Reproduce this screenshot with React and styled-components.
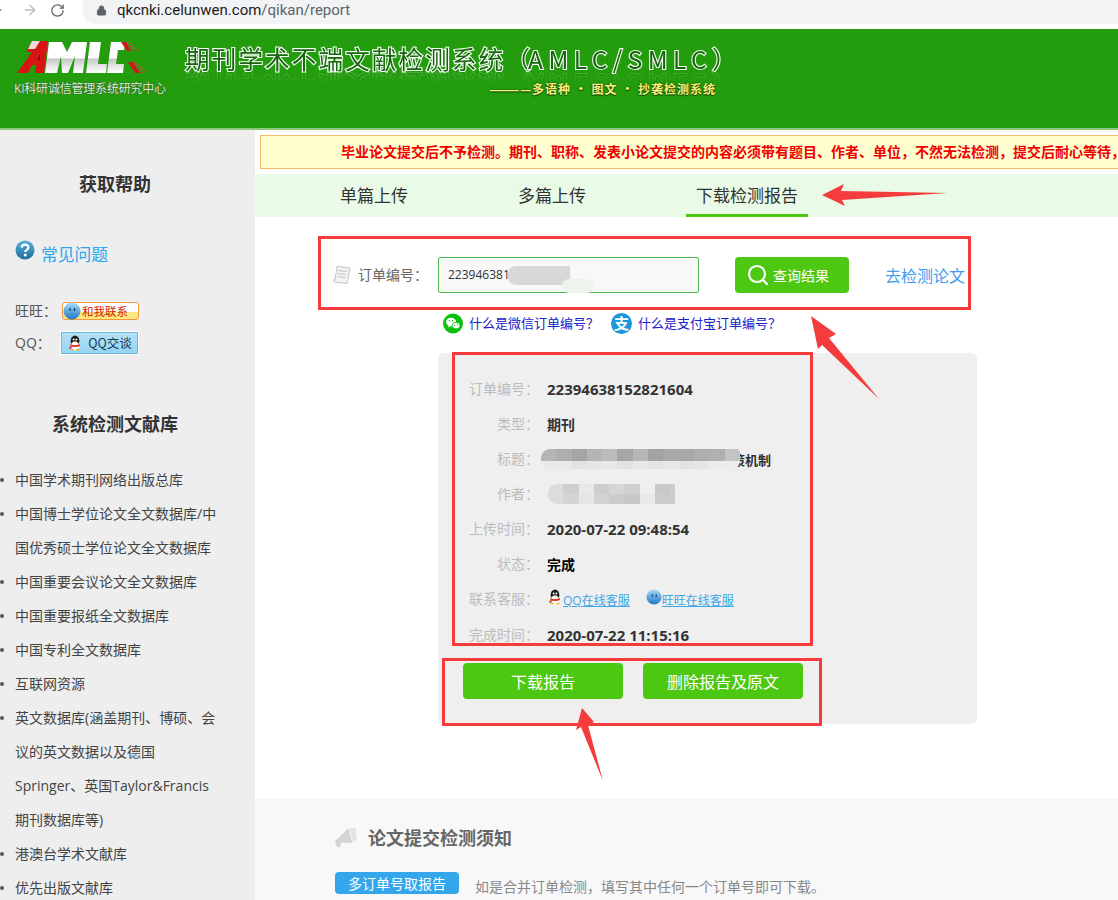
import React from "react";
import styled, { createGlobalStyle } from "styled-components";
import { ArrowLeft, ArrowRight, RotateCw, Lock, Search } from "lucide-react";

const Global = createGlobalStyle`
  html, body { margin: 0; padding: 0; background: #fff; }
  body { font-family: "Open Sans", "Noto Sans CJK SC", sans-serif; }
  * { box-sizing: border-box; }
`;

const Page = styled.div`
  position: relative;
  width: 1118px;
  height: 900px;
  overflow: hidden;
  background: #fff;
`;

/* browser chrome */
const Chrome = styled.div`
  height: 29px;
  display: flex;
  align-items: flex-start;
  background: #fff;
  color: #5f6368;
`;
const NavIcon = styled.span`
  width: ${(p) => p.$w}px;
  height: 20px;
  flex: none;
  display: flex;
  align-items: center;
  justify-content: ${(p) => p.$justify || "center"};
  color: ${(p) => p.$color || "#5f6368"};
  overflow: hidden;
`;
const Omnibox = styled.div`
  flex: 1;
  height: 24px;
  margin-left: 7px;
  padding: 0 0 4px 13px;
  display: flex;
  align-items: center;
  gap: 10px;
  background: #f1f3f4;
  border-radius: 0 0 0 12px;
`;
const Url = styled.span`
  font: 400 15px/20px Roboto, sans-serif;
  color: #202124;
  span { color: #5f6368; }
`;

/* green site banner */
const Banner = styled.header`
  height: 101px;
  background: #239d0e;
  border-bottom: 2px solid #8cc97f;
  display: flex;
`;
const Brand = styled.div`
  width: 185px;
  flex: none;
  padding: 11px 0 0 15px;
  svg { display: block; }
`;
const BrandCaption = styled.div`
  margin: 6px 0 0 -1px;
  width: 170px;
  font-size: 12px;
  line-height: 16px;
  letter-spacing: -0.2px;
  color: #dfe9da;
  white-space: nowrap;
  text-shadow: 0 0 1px #33502c, 0 0 1px #33502c;
`;
const BannerText = styled.div`
  width: 537px;
  padding-top: 14px;
`;
const BannerTitle = styled.div`
  font: 400 24.5px/32px "Noto Sans CJK SC", sans-serif;
  letter-spacing: 2.2px;
  white-space: nowrap;
  color: #17650f;
  -webkit-text-stroke: 2.2px #f6fff4;
  paint-order: stroke fill;
  -webkit-box-reflect: below -7px linear-gradient(transparent 50%, rgba(255, 255, 255, 0.22));
`;
const TitleLatin = styled.span`
  letter-spacing: 5.4px;
  margin-left: -4px;
`;
const BannerSub = styled.div`
  margin-top: 5px;
  text-align: right;
  padding-right: 6px;
  font: 700 12px/18px "Noto Sans CJK SC", sans-serif;
  letter-spacing: 1px;
  color: #f7ee7e;
  text-shadow: 0 0 2px #0c4204, 0 1px 1px #0c4204;
  white-space: nowrap;
`;

/* two columns under the banner */
const Columns = styled.div`
  display: flex;
  height: 770px;
`;
const Sidebar = styled.aside`
  width: 255px;
  flex: none;
  background: #eee;
  color: #444;
  padding-top: 41px;
`;
const SideTitle = styled.h3`
  margin: 0;
  padding-right: 25px;
  text-align: center;
  font: 700 18px/24px "Noto Sans CJK SC", sans-serif;
  color: #333;
`;
const FaqRow = styled.div`
  display: flex;
  align-items: flex-start;
  gap: 6px;
  margin: 45px 0 0 15px;
  height: 30px;
`;
const FaqLink = styled.a`
  font-size: 16.8px;
  line-height: 30px;
  color: #2aa7f0;
`;
const ContactRow = styled.div`
  display: flex;
  align-items: center;
  height: ${(p) => p.$h}px;
  margin: ${(p) => p.$top}px 0 0 15px;
  font: 400 14px/20px "Open Sans", "Noto Sans CJK SC", sans-serif;
  color: #555;
`;
const ContactLabel = styled.span`
  width: ${(p) => p.$w}px;
  flex: none;
`;
const WangBadge = styled.span`
  width: 77px;
  height: 18px;
  display: flex;
  align-items: center;
  gap: 1px;
  border: 1px solid #f59a3c;
  border-radius: 3px;
  background: linear-gradient(#fff 0 55%, #ffe680 55% 100%);
  font: 400 11.5px/16px "Noto Sans CJK SC", sans-serif;
  color: #d01c00;
  white-space: nowrap;
`;
const QQBadge = styled.span`
  width: 79px;
  height: 24px;
  display: flex;
  align-items: center;
  justify-content: center;
  gap: 5px;
  border: 1px solid #fff;
  box-shadow: inset 0 0 0 1px #6fb6d8;
  background: linear-gradient(#b7e2f8, #93d3f3);
  font: 400 12.5px/16px "Noto Sans CJK SC", sans-serif;
  color: #163a52;
`;
const LibraryHead = styled(SideTitle)`
  margin-top: 56px;
`;
const LibraryList = styled.ul`
  list-style: none;
  margin: 28px 0 0;
  padding: 0 35px 0 15px;
`;
const LibraryItem = styled.li`
  position: relative;
  font: 400 14px/34px "Open Sans", "Noto Sans CJK SC", sans-serif;
  color: #444;
  &::before {
    content: "";
    position: absolute;
    left: -15px;
    top: 15px;
    width: 4px;
    height: 4px;
    border-radius: 50%;
    background: #555;
  }
`;

const Main = styled.main`
  flex: 1;
  min-width: 0;
  padding-top: 5px;
  display: flex;
  flex-direction: column;
  > * { flex: none; }
`;
const Notice = styled.div`
  margin-left: 5px;
  height: 34px;
  padding-left: 80px;
  border: 1px solid #f5bd63;
  border-right: 0;
  background: #ffffcf;
  font: 700 14px/30px "Noto Sans CJK SC", sans-serif;
  color: #f00000;
  white-space: nowrap;
  overflow: hidden;
`;
const Tabs = styled.nav`
  margin-top: 5px;
  height: 43px;
  background: #e9fbe6;
  display: flex;
  padding-left: 85px;
`;
const Tab = styled.a`
  display: block;
  width: ${(p) => p.$w}px;
  text-align: ${(p) => (p.$active ? "center" : "left")};
  font: 400 17px/41px "Noto Sans CJK SC", sans-serif;
  color: #333;
  border-bottom: 3px solid ${(p) => (p.$active ? "#4dc812" : "transparent")};
`;
const SearchRow = styled.div`
  margin: 40px 0 0 77px;
  display: flex;
  align-items: center;
  height: 36px;
`;
const SearchLabel = styled.span`
  width: 80px;
  margin: -3px 0 0 6px;
  flex: none;
  font-size: 14px;
  color: #666;
`;
const OrderInput = styled.div`
  width: 261px;
  height: 36px;
  flex: none;
  padding-left: 9px;
  border: 1px solid #4db84d;
  border-radius: 2px;
  background: #f8f8f8;
  font: 400 12px/34px "Open Sans", sans-serif;
  color: #333;
`;
const QueryButton = styled.button`
  width: 114px;
  height: 36px;
  margin-left: 36px;
  flex: none;
  padding: 0 0 0 11px;
  border: 0;
  border-radius: 4px;
  background: #4dc812;
  color: #fff;
  display: flex;
  align-items: center;
  gap: 3px;
  font: 400 14px/20px "Noto Sans CJK SC", sans-serif;
`;
const CheckLink = styled.a`
  margin-left: 36px;
  font-size: 16px;
  color: #3a9bf0;
  white-space: nowrap;
`;
const HelpRow = styled.div`
  margin: 19px 0 0 188px;
  height: 22px;
  display: flex;
  align-items: center;
`;
const HelpLink = styled.a`
  margin: 0 12px 0 6px;
  font: 400 13px/20px "Open Sans", "Noto Sans CJK SC", sans-serif;
  color: #2020c8;
`;
const AlipayDot = styled.span`
  width: 21px;
  height: 21px;
  border-radius: 50%;
  background: #1b96dc;
  color: #fff;
  font: 700 15px/20px "Noto Sans CJK SC", sans-serif;
  text-align: center;
`;
const Panel = styled.section`
  margin: 19px 0 0 183px;
  width: 539px;
  height: 371px;
  padding-top: 19px;
  border-radius: 6px;
  background: #efefef;
`;
const InfoRow = styled.div`
  position: relative;
  display: flex;
  align-items: center;
  height: 35px;
  font: 700 14px/20px "Open Sans", "Noto Sans CJK SC", sans-serif;
  color: #333;
`;
const ClosingRow = styled(InfoRow)`
  padding-top: 2px;
`;
const InfoLabel = styled.span`
  width: 101px;
  margin: -1px 8px 0 0;
  flex: none;
  text-align: right;
  font-weight: 400;
  font-size: 14px;
  color: #bcbcbc;
`;
const InfoValue = styled.span`
  font-size: ${(p) => (p.$num ? 15 : p.$small ? 13 : 14)}px;
  color: ${(p) => p.$color || "#333"};
  margin-left: ${(p) => p.$offset || 0}px;
  margin-top: ${(p) => (p.$num ? -2 : 1)}px;
`;
const ServiceLink = styled.a`
  display: inline-flex;
  align-items: center;
  padding-top: 3px;
  font: 400 12px/16px "Open Sans", "Noto Sans CJK SC", sans-serif;
  color: #3aa7e8;
  text-decoration: underline;
  margin-right: 16px;
  svg { margin-top: -8px; }
`;
const Mosaic = styled.div`
  position: absolute;
  left: ${(p) => p.$left}px;
  top: ${(p) => p.$top}px;
  width: ${(p) => p.$width}px;
  display: grid;
  grid-template-columns: repeat(${(p) => p.$cols}, 15.3px);
  grid-template-rows: ${(p) => p.$rows};
  overflow: hidden;
  border-radius: ${(p) => p.$radius};
`;
const Cell = styled.i`
  display: block;
  background: ${(p) => p.$c};
`;
const ActionRow = styled.div`
  margin: 11px 0 0 25px;
  display: flex;
  gap: 20px;
`;
const ActionButton = styled.button`
  width: 160px;
  height: 36px;
  border: 0;
  border-radius: 4px;
  background: #4dc812;
  color: #fff;
  font: 400 16px/20px "Noto Sans CJK SC", sans-serif;
`;
const Instructions = styled.section`
  margin-top: 75px;
  height: 101px;
  overflow: hidden;
  background: #f8f8f8;
  padding: 26px 0 0 80px;
`;
const InstructionHead = styled.h3`
  margin: 0 0 23px -1px;
  display: flex;
  align-items: center;
  gap: 10px;
  font: 700 18px/24px "Noto Sans CJK SC", sans-serif;
  color: #666;
`;
const InstructionRow = styled.div`
  display: flex;
  align-items: flex-start;
  gap: 16px;
`;
const InstructionTag = styled.span`
  width: 124px;
  height: 22px;
  border-radius: 4px;
  background: #33a6ec;
  color: #fff;
  text-align: center;
  font: 400 14px/22px "Noto Sans CJK SC", sans-serif;
`;
const InstructionText = styled.span`
  font: 400 14px/28px "Noto Sans CJK SC", sans-serif;
  color: #888;
`;

/* hand-drawn review marks that sit on top of the page */
const Outline = styled.div`
  position: absolute;
  left: ${(p) => p.$x}px;
  top: ${(p) => p.$y}px;
  width: ${(p) => p.$w}px;
  height: ${(p) => p.$h}px;
  border: 3px solid #f53c3c;
  pointer-events: none;
`;
const MarkLayer = styled.svg`
  position: absolute;
  inset: 0;
  pointer-events: none;
`;
const Smudge = styled.div`
  position: absolute;
  left: 508px;
  top: 266px;
  width: 62px;
  height: 19px;
  background: #d8d8d8;
  border-radius: 8px 0 0 8px;
  &::after {
    content: "";
    position: absolute;
    left: 54px;
    top: 13px;
    width: 32px;
    height: 14px;
    border-radius: 8px;
    background: #edf4ec;
  }
`;

const LogoMark = () => (
  <svg width="132" height="35" viewBox="0 0 132 35">
    <defs>
      <linearGradient id="logoSteel" x1="0" y1="0" x2="0" y2="1">
        <stop offset="0" stopColor="#fff" />
        <stop offset=".5" stopColor="#fff" />
        <stop offset=".56" stopColor="#c8c8c8" />
        <stop offset=".85" stopColor="#eee" />
        <stop offset="1" stopColor="#fff" />
      </linearGradient>
    </defs>
    <path d="M2 33 L17 12 L11 12 L17 1 L33 1 L29 33 L20 33 L21 25 L17 25 L13 33 Z" fill="#d91414" />
    <path d="M17 1 H25 L20 9 H13 Z" fill="#f6d9d9" />
    <path d="M25 14 L22 20 H25 Z" fill="#7d0d0d" />
    <path d="M34 2 H47 L52 12 L57 2 H72 L68 33 H58 L60 16 L53 33 H47 L46 16 L42 33 H30 Z" fill="url(#logoSteel)" />
    <path d="M75 2 H86 L83 24 H92 L91 33 H71 Z" fill="url(#logoSteel)" />
    <path d="M96 2 H110 L109 10 H103 L101 24 H109 L108 33 H92 Z" fill="url(#logoSteel)" />
    <path d="M106 2 H111 L116 11 H112 Z" fill="#d01616" />
    <path d="M111 2 L120 11 M114 2 L123 11" stroke="#d04a3a" strokeWidth="1" />
    <path d="M113 22 H118 L125 33 H120 Z" fill="#d01616" />
    <path d="M118 22 L128 33 M121 22 L131 33" stroke="#d04a3a" strokeWidth="1" />
  </svg>
);
const HelpCircle = () => (
  <svg width="20" height="20" viewBox="0 0 20 20">
    <defs>
      <linearGradient id="faqBall" x1="0" y1="0" x2="0" y2="1">
        <stop offset="0" stopColor="#57b1d9" />
        <stop offset="1" stopColor="#1c6ea0" />
      </linearGradient>
    </defs>
    <circle cx="10" cy="10" r="9.5" fill="url(#faqBall)" />
    <path d="M6.7 7.6 C6.8 3.6 13.4 3.6 13.4 7.5 C13.4 10 10.2 9.8 10.2 12" fill="none" stroke="#fff" strokeWidth="2.2" />
    <circle cx="10.2" cy="15" r="1.5" fill="#fff" />
  </svg>
);
const WangFace = ({ size = 18 }) => (
  <svg width={size} height={size} viewBox="0 0 18 18">
    <defs>
      <linearGradient id={`wang${size}`} x1="0" y1="0" x2="0" y2="1">
        <stop offset="0" stopColor="#a8dcf7" />
        <stop offset="1" stopColor="#1f77c8" />
      </linearGradient>
    </defs>
    <circle cx="9" cy="9" r="8.5" fill={`url(#wang${size})`} />
    <path d="M7 6 V9 M11.5 6 V9" stroke="#12365c" strokeWidth="1.2" />
  </svg>
);
const Penguin = ({ size = 16 }) => (
  <svg width={size} height={size} viewBox="0 0 16 16">
    <ellipse cx="8" cy="6" rx="4.4" ry="5.4" fill="#1b1b1b" />
    <ellipse cx="8" cy="11" rx="4.4" ry="4.4" fill="#fff" />
    <path d="M3.4 9 Q8 11.4 12.6 9 L13 11 Q8 13 3 11 Z M3.4 10 L2 14 L5 13 Z" fill="#e0271b" />
    <circle cx="6.6" cy="4.6" r="1" fill="#fff" />
    <circle cx="9.4" cy="4.6" r="1" fill="#fff" />
    <path d="M6.4 6.4 H9.6 L8 7.8 Z" fill="#f5b21c" />
    <path d="M3.5 14.6 H7 M9 14.6 H12.5" stroke="#f5b21c" strokeWidth="1.4" />
  </svg>
);
const PaperIcon = () => (
  <svg width="20" height="20" viewBox="0 0 20 20">
    <path d="M5 1.5 L18 3 L15 18.5 L3 17 Q1 16.6 1.6 14.6 L3 14.8 Z" fill="#f3f3f3" stroke="#c4c4c4" />
    <path d="M6 5.5 L14.5 6.5 M5.5 8.5 L14 9.5 M5 11.5 L13.5 12.5" stroke="#c4c4c4" />
  </svg>
);
const WeChat = () => (
  <svg width="20" height="21" viewBox="0 0 20 21">
    <circle cx="10" cy="10.5" r="10" fill="#0cc10c" />
    <ellipse cx="8" cy="9" rx="5" ry="4.2" fill="#fff" />
    <ellipse cx="13" cy="12.6" rx="4" ry="3.3" fill="#fff" stroke="#0cc10c" strokeWidth=".8" />
    <path d="M5.8 12 L5.2 14.4 L8 13 Z" fill="#fff" />
    <circle cx="6.4" cy="7.8" r=".8" fill="#0cc10c" />
    <circle cx="9.6" cy="7.8" r=".8" fill="#0cc10c" />
    <circle cx="11.6" cy="12" r=".6" fill="#0cc10c" />
    <circle cx="14.4" cy="12" r=".6" fill="#0cc10c" />
  </svg>
);
const Megaphone = () => (
  <svg width="24" height="20" viewBox="0 0 24 20">
    <path d="M1 14 L15 1 L22 8 Q21 14 19 16 L7 15.5 L6 20 L3 20 Z" fill="#d4d4d4" />
    <path d="M15 1 L22 0.5 L23 13 L19 16 Z" fill="#e2e2e2" stroke="#f8f8f8" />
  </svg>
);

const libraries = [
  "中国学术期刊网络出版总库",
  "中国博士学位论文全文数据库/中国优秀硕士学位论文全文数据库",
  "中国重要会议论文全文数据库",
  "中国重要报纸全文数据库",
  "中国专利全文数据库",
  "互联网资源",
  "英文数据库(涵盖期刊、博硕、会议的英文数据以及德国Springer、英国Taylor&Francis 期刊数据库等)",
  "港澳台学术文献库",
  "优先出版文献库",
];

const titleCells = ["#b5b5b3", "#aeaeac", "#a5a5a3", "#b6b5b2", "#bbbcbd", "#a6a6a6", "#b6b6b4", "#a4a3a3", "#a8a8a8", "#a8a8a6", "#aeaeac", "#b0b0ae", "#c4c4c4", "#e9e9e9", "#e9e9e9", "#e3e3e3", "#e6e6e6", "#e8e8e8", "#e2e2e2", "#e8e8e8", "#e4e4e4", "#e8e8e8", "#e2e2e2", "#e6e6e6", "#ebebeb", "#ededed"];
const authorCells = ["#dcdcdc", "#cecece", "#e8e8e8", "#cdcdcd", "#d6d6d6", "#cfcfcf", "#efefef", "#c8c8c8", "#cdcdcd", "#dcdcdc", "#d4d4d4", "#e5e5e5", "#d2d2d2", "#cccccc", "#c8c8c8", "#e9e9e9", "#cbcbcb", "#cdcdcd"];

export default function App() {
  return (
    <Page>
      <Global />
      <Chrome>
        <NavIcon $w={22} $justify="flex-start"><ArrowLeft size={16} style={{ marginLeft: -12, flex: "none" }} /></NavIcon>
        <NavIcon $w={16} $color="#b8babd"><ArrowRight size={16} /></NavIcon>
        <NavIcon $w={38}><RotateCw size={15} /></NavIcon>
        <Omnibox>
          <Lock size={11} fill="#5f6368" />
          <Url>qkcnki.celunwen.com<span>/qikan/report</span></Url>
        </Omnibox>
      </Chrome>

      <Banner>
        <Brand>
          <LogoMark />
          <BrandCaption>KI科研诚信管理系统研究中心</BrandCaption>
        </Brand>
        <BannerText>
          <BannerTitle>期刊学术不端文献检测系统（<TitleLatin>AMLC/SMLC</TitleLatin>）</BannerTitle>
          <BannerSub>————多语种 · 图文 · 抄袭检测系统</BannerSub>
        </BannerText>
      </Banner>

      <Columns>
        <Sidebar>
          <SideTitle>获取帮助</SideTitle>
          <FaqRow>
            <HelpCircle />
            <FaqLink>常见问题</FaqLink>
          </FaqRow>
          <ContactRow $top={32} $h={18}>
            <ContactLabel $w={47}>旺旺：</ContactLabel>
            <WangBadge><WangFace />和我联系</WangBadge>
          </ContactRow>
          <ContactRow $top={11} $h={24}>
            <ContactLabel $w={45}>QQ：</ContactLabel>
            <QQBadge><Penguin />QQ交谈</QQBadge>
          </ContactRow>
          <LibraryHead>系统检测文献库</LibraryHead>
          <LibraryList>
            {libraries.map((item) => (
              <LibraryItem key={item}>{item}</LibraryItem>
            ))}
          </LibraryList>
        </Sidebar>

        <Main>
          <Notice>毕业论文提交后不予检测。期刊、职称、发表小论文提交的内容必须带有题目、作者、单位，不然无法检测，提交后耐心等待，</Notice>
          <Tabs>
            <Tab $w={178}>单篇上传</Tab>
            <Tab $w={168}>多篇上传</Tab>
            <Tab $w={122} $active>下载检测报告</Tab>
          </Tabs>
          <SearchRow>
            <PaperIcon />
            <SearchLabel>订单编号：</SearchLabel>
            <OrderInput>223946381</OrderInput>
            <QueryButton><Search size={24} strokeWidth={2.2} />查询结果</QueryButton>
            <CheckLink>去检测论文</CheckLink>
          </SearchRow>
          <HelpRow>
            <WeChat />
            <HelpLink>什么是微信订单编号？</HelpLink>
            <AlipayDot>支</AlipayDot>
            <HelpLink>什么是支付宝订单编号？</HelpLink>
          </HelpRow>
          <Panel>
            <InfoRow><InfoLabel>订单编号：</InfoLabel><InfoValue $num>22394638152821604</InfoValue></InfoRow>
            <InfoRow><InfoLabel>类型：</InfoLabel><InfoValue>期刊</InfoValue></InfoRow>
            <InfoRow>
              <InfoLabel>标题：</InfoLabel>
              <InfoValue $small $offset={185}>策机制</InfoValue>
              <Mosaic $left={103} $top={7} $width={199} $cols={13} $rows="12px 8px" $radius="9px 4px 8px 9px">
                {titleCells.map((c, i) => <Cell key={i} $c={c} />)}
              </Mosaic>
            </InfoRow>
            <InfoRow>
              <InfoLabel>作者：</InfoLabel>
              <Mosaic $left={110} $top={7} $width={127} $cols={9} $rows="10px 10px" $radius="9px 0 0 9px">
                {authorCells.map((c, i) => <Cell key={i} $c={c} />)}
              </Mosaic>
            </InfoRow>
            <InfoRow><InfoLabel>上传时间：</InfoLabel><InfoValue $num>2020-07-22 09:48:54</InfoValue></InfoRow>
            <InfoRow><InfoLabel>状态：</InfoLabel><InfoValue $color="#000">完成</InfoValue></InfoRow>
            <InfoRow>
              <InfoLabel>联系客服：</InfoLabel>
              <ServiceLink><Penguin />QQ在线客服</ServiceLink>
              <ServiceLink><WangFace size={16} />旺旺在线客服</ServiceLink>
            </InfoRow>
            <ClosingRow><InfoLabel>完成时间：</InfoLabel><InfoValue $num>2020-07-22 11:15:16</InfoValue></ClosingRow>
            <ActionRow>
              <ActionButton>下载报告</ActionButton>
              <ActionButton>删除报告及原文</ActionButton>
            </ActionRow>
          </Panel>
          <Instructions>
            <InstructionHead><Megaphone />论文提交检测须知</InstructionHead>
            <InstructionRow>
              <InstructionTag>多订单号取报告</InstructionTag>
              <InstructionText>如是合并订单检测，填写其中任何一个订单号即可下载。</InstructionText>
            </InstructionRow>
          </Instructions>
        </Main>
      </Columns>

      <Smudge />
      <Outline $x={318} $y={236} $w={653} $h={74} />
      <Outline $x={452} $y={352} $w={361} $h={294} />
      <Outline $x={442} $y={658} $w={380} $h={68} />
      <MarkLayer width="1118" height="900" viewBox="0 0 1118 900">
        <path d="M822 195 L844 184 L841 191 L948 193 L842 200 L845 206 Z" fill="#f53c3c" />
        <path d="M811 316 L836 334 L829 338 L879 399 L822 345 L818 349 Z" fill="#f53c3c" />
        <path d="M582 708 L594 722 L588 725 L603 781 L581 727 L576 730 Z" fill="#f53c3c" />
      </MarkLayer>
    </Page>
  );
}
